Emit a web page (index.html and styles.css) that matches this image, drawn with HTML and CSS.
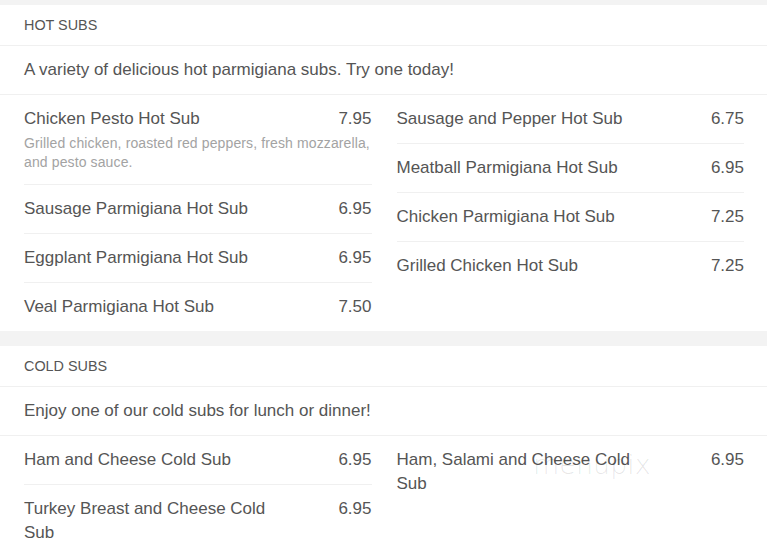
FILE: index.html
```html
<!DOCTYPE html>
<html>
<head>
<meta charset="utf-8">
<link rel="stylesheet" href="styles.css">
</head>
<body>
<div class="page">
  <section class="card">
    <div class="card-head">HOT SUBS</div>
    <div class="card-desc">A variety of delicious hot parmigiana subs. Try one today!</div>
    <div class="grid">
      <div class="col">
        <div class="item">
          <div class="row"><span class="name">Chicken Pesto Hot Sub</span><span class="price">7.95</span></div>
          <div class="desc">Grilled chicken, roasted red peppers, fresh mozzarella, and pesto sauce.</div>
        </div>
        <div class="item"><div class="row"><span class="name">Sausage Parmigiana Hot Sub</span><span class="price">6.95</span></div></div>
        <div class="item"><div class="row"><span class="name">Eggplant Parmigiana Hot Sub</span><span class="price">6.95</span></div></div>
        <div class="item"><div class="row"><span class="name">Veal Parmigiana Hot Sub</span><span class="price">7.50</span></div></div>
      </div>
      <div class="col">
        <div class="item"><div class="row"><span class="name">Sausage and Pepper Hot Sub</span><span class="price">6.75</span></div></div>
        <div class="item"><div class="row"><span class="name">Meatball Parmigiana Hot Sub</span><span class="price">6.95</span></div></div>
        <div class="item"><div class="row"><span class="name">Chicken Parmigiana Hot Sub</span><span class="price">7.25</span></div></div>
        <div class="item"><div class="row"><span class="name">Grilled Chicken Hot Sub</span><span class="price">7.25</span></div></div>
      </div>
    </div>
  </section>
  <section class="card">
    <div class="card-head">COLD SUBS</div>
    <div class="card-desc">Enjoy one of our cold subs for lunch or dinner!</div>
    <div class="grid">
      <div class="col">
        <div class="item"><div class="row"><span class="name">Ham and Cheese Cold Sub</span><span class="price">6.95</span></div></div>
        <div class="item"><div class="row"><span class="name">Turkey Breast and Cheese Cold Sub</span><span class="price">6.95</span></div></div>
      </div>
      <div class="col">
        <div class="item"><div class="row"><span class="name">Ham, Salami and Cheese Cold Sub</span><span class="price">6.95</span></div></div>
      </div>
    </div>
  </section>
</div>
<div class="watermark">menupix</div>
</body>
</html>
```
FILE: styles.css
```css
html, body {
  margin: 0;
  padding: 0;
  background: #f3f3f3;
}
body {
  font-family: "Liberation Sans", Arial, sans-serif;
  color: #555;
  position: relative;
  height: 552px;
  overflow: hidden;
}
.page {
  padding-top: 5px;
  display: flex;
  flex-direction: column;
  gap: 15px;
}
.card {
  background: #fff;
}
.card-head {
  font-size: 14.4px;
  line-height: 20px;
  padding: 10px 24px 10px;
  border-bottom: 1px solid #f0f0f0;
  color: #555;
}
.card-desc {
  font-size: 17px;
  line-height: 24px;
  padding: 12px 24px 12px;
  border-bottom: 1px solid #f0f0f0;
}
.grid {
  display: grid;
  grid-template-columns: 1fr 1fr;
  column-gap: 25px;
  padding: 0 23px 0 24px;
}
.item {
  padding: 12px 0;
  border-bottom: 1px solid #f0f0f0;
}
.item:last-child {
  border-bottom: none;
}
.row {
  display: flex;
  justify-content: space-between;
  align-items: flex-start;
  font-size: 17px;
  line-height: 24px;
}
.name {
  max-width: 75%;
}
.price {
  text-align: right;
}
.desc {
  font-size: 14px;
  letter-spacing: 0.12px;
  line-height: 19px;
  color: #a3a3a3;
  margin-top: 3px;
}
.watermark {
  position: absolute;
  left: 533px;
  top: 449px;
  font-family: "DejaVu Sans", sans-serif;
  font-size: 27px;
  font-weight: 200;
  color: rgba(0, 0, 0, 0.1);
}
```
